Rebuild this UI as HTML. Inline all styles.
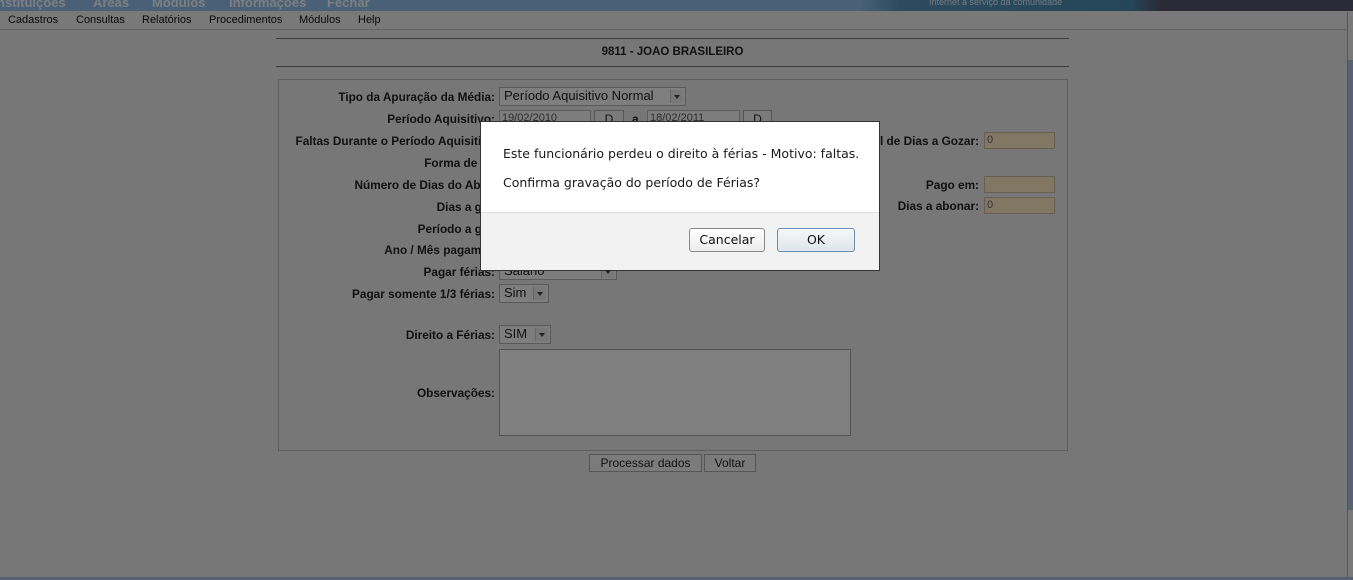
<!DOCTYPE html>
<html><head><meta charset="utf-8"><style>
*{margin:0;padding:0;box-sizing:border-box}
html,body{width:1353px;height:580px;overflow:hidden}
body{background:#e9e9e9;font-family:"Liberation Sans",sans-serif;position:relative;color:#222}
.a{position:absolute}
.top{left:0;top:0;width:1353px;height:11px;background:linear-gradient(90deg,#8fbde8 0,#8fbde8 860px,#5a93b8 900px,#4a8aae 1130px,#55556f 1160px,#55556f 1353px);overflow:hidden}
.top span{position:absolute;top:-5px;font-size:13px;font-weight:bold;color:#f4f8ff}
.menu{left:0;top:11px;width:1353px;height:19px;background:#ededed;border-bottom:1px solid #c4c4c4}
.menu span{position:absolute;top:3px;font-size:11px;color:#111}
.hr{left:276px;width:793px;height:1px;background:#777}
.panel{left:278px;top:79px;width:790px;height:372px;border:1px solid #b8b8b8}
.lbl{font-size:11.8px;font-weight:bold;text-align:right;color:#222;white-space:nowrap}
.fld{border:1px solid #b5b5b5;background:#f6f6f6;font-size:11px;color:#555;padding-left:2px;line-height:15px}
.sel{border:1px solid #b0b0b0;background:#f8f8f8;font-size:13px;color:#222;padding-left:4px;line-height:16px}
.sel:after{content:"";position:absolute;right:2px;top:2px;width:12px;height:13px;background:#ececec;border-left:1px solid #c8c8c8}
.sel i{position:absolute;right:5px;top:7px;border-left:3px solid transparent;border-right:3px solid transparent;border-top:4px solid #222;z-index:2}
.btn{border:1px solid #aaa;background:#f2f2f2;font-size:12px;text-align:center;color:#222;line-height:16px}
.or{border:1px solid #c9bd9e;background:#ffe9c2;font-size:11px;color:#666;padding-left:2px;line-height:15px}
.ov{left:0;top:0;width:1353px;height:580px;background:rgba(0,0,0,0.49)}
.dlg{left:480px;top:121px;width:400px;height:150px;background:#fff;border:1px solid #333}
.dlg .ft{position:absolute;left:0;top:90px;width:398px;height:58px;background:#f2f2f2;border-top:1px solid #ddd}
.dt{font-family:"DejaVu Sans",sans-serif;font-size:12.5px;color:#1a1a1a;position:absolute;left:22px}
.db{position:absolute;font-family:"DejaVu Sans",sans-serif;font-size:12.5px;text-align:center;border:1px solid #8a8a8a;border-radius:3px;background:linear-gradient(#fff,#ececec);line-height:22px;color:#111}
</style></head><body>
<div class="a top"><span style="left:-3px">nstituições</span><span style="left:93px">Áreas</span><span style="left:152px">Módulos</span><span style="left:229px">Informações</span><span style="left:327px">Fechar</span><span style="left:929px;font-size:9px;font-weight:normal;top:-3px;color:#e0eef8">Internet a serviço da comunidade</span></div>
<div class="a menu"><span style="left:8px">Cadastros</span><span style="left:76px">Consultas</span><span style="left:142px">Relatórios</span><span style="left:209px">Procedimentos</span><span style="left:299px">Módulos</span><span style="left:358px">Help</span></div>
<div class="a" style="left:1347px;top:12px;width:6px;height:566px;border-left:1px solid #aaa;background:#eee"></div>
<div class="a" style="left:1348px;top:60px;width:5px;height:450px;background:#a8c2de"></div>
<div class="a" style="left:0;top:577px;width:1353px;height:3px;background:#a6bfd8"></div>
<div class="a hr" style="top:38px"></div>
<div class="a" style="left:276px;top:46px;width:793px;text-align:center;font-size:11.5px;font-weight:bold">9811 - JOAO BRASILEIRO</div>
<div class="a hr" style="top:66px"></div>
<div class="a panel"></div>

<div class="a lbl" style="right:858px;top:90px">Tipo da Apuração da Média:</div>
<div class="a sel" style="left:499px;top:87px;width:187px;height:19px">Período Aquisitivo Normal<i></i></div>
<div class="a lbl" style="right:858px;top:112px">Período Aquisitivo:</div>
<div class="a fld" style="left:499px;top:110px;width:92px;height:17px">19/02/2010</div>
<div class="a btn" style="left:594px;top:110px;width:30px;height:17px">D</div>
<div class="a lbl" style="left:632px;top:112px">a</div>
<div class="a fld" style="left:647px;top:110px;width:93px;height:17px">18/02/2011</div>
<div class="a btn" style="left:743px;top:110px;width:29px;height:17px">D</div>
<div class="a lbl" style="right:858px;top:134px">Faltas Durante o Período Aquisitivo</div>
<div class="a lbl" style="right:858px;top:156px">Forma de pg</div>
<div class="a lbl" style="right:858px;top:178px">Número de Dias do Abon</div>
<div class="a lbl" style="right:858px;top:200px">Dias a goz</div>
<div class="a lbl" style="right:858px;top:222px">Período a goz</div>
<div class="a lbl" style="right:858px;top:243px">Ano / Mês pagamen</div>
<div class="a lbl" style="right:858px;top:265px">Pagar férias:</div>
<div class="a sel" style="left:499px;top:262px;width:118px;height:18px">Salário<i></i></div>
<div class="a lbl" style="right:858px;top:287px">Pagar somente 1/3 férias:</div>
<div class="a sel" style="left:499px;top:284px;width:50px;height:19px">Sim<i></i></div>
<div class="a lbl" style="right:858px;top:328px">Direito a Férias:</div>
<div class="a sel" style="left:499px;top:325px;width:52px;height:19px">SIM<i></i></div>
<div class="a lbl" style="right:858px;top:386px">Observações:</div>
<div class="a" style="left:499px;top:349px;width:352px;height:87px;border:1px solid #a8a8a8;background:#fbfbfb"></div>
<div class="a lbl" style="right:374px;top:134px">l de Dias a Gozar:</div>
<div class="a or" style="left:984px;top:132px;width:71px;height:17px">0</div>
<div class="a lbl" style="right:374px;top:178px">Pago em:</div>
<div class="a or" style="left:984px;top:176px;width:71px;height:17px"></div>
<div class="a lbl" style="right:374px;top:199px">Dias a abonar:</div>
<div class="a or" style="left:984px;top:197px;width:71px;height:17px">0</div>
<div class="a btn" style="left:589px;top:454px;width:113px;height:18px">Processar dados</div>
<div class="a btn" style="left:704px;top:454px;width:52px;height:18px">Voltar</div>

<div class="a ov"></div>

<div class="a dlg">
<div class="dt" style="top:24px">Este funcionário perdeu o direito à férias - Motivo: faltas.</div>
<div class="dt" style="top:53px">Confirma gravação do período de Férias?</div>
<div class="ft"></div>
<div class="db" style="left:208px;top:106px;width:76px;height:24px">Cancelar</div>
<div class="db" style="left:296px;top:106px;width:78px;height:24px;border-color:#6f8fb0;background:linear-gradient(#f6f8fa,#dfe5ea)">OK</div>
</div>
</body></html>
